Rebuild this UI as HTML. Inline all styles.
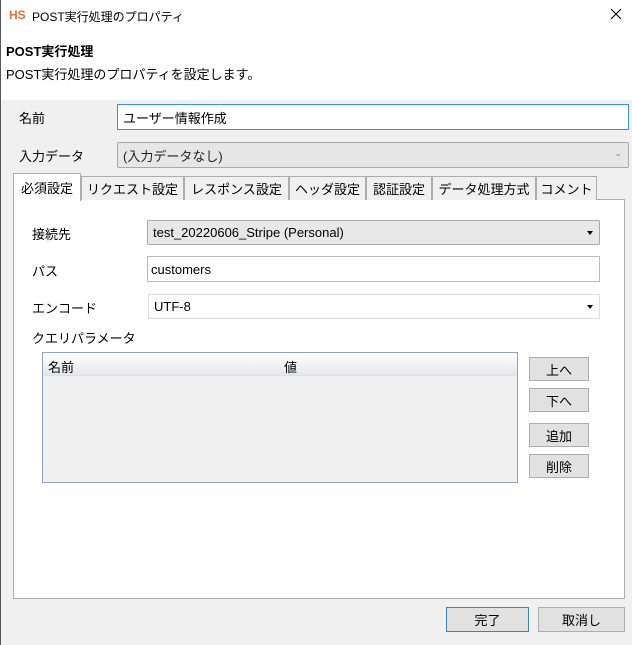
<!DOCTYPE html>
<html><head><meta charset="utf-8"><style>
*{box-sizing:border-box;margin:0;padding:0}
body{width:632px;height:645px;overflow:hidden;background:#f0f0f0;font-family:"Liberation Sans","Noto Sans CJK JP",sans-serif;font-size:13px;color:#000;position:relative}
.a{position:absolute}
.top{left:0;top:0;width:632px;height:100px;background:#fff}
.lb{left:0;top:0;width:1px;height:645px;background:#555}
.inp{background:#fff;border:1px solid #bbb;padding:0 5px;display:flex;align-items:center}
.cmb{background:#e8e8e8;border:1px solid #aaa;border-radius:2px;padding:0 5px;display:flex;align-items:center}
.arr{position:absolute;right:6px;top:50%;margin-top:-2px;border-left:3.5px solid transparent;border-right:3.5px solid transparent;border-top:4px solid #000}
.tab{top:176px;height:24px;background:#f0f0f0;border:1px solid #adadad;border-bottom:none;display:flex;align-items:center;justify-content:center;font-size:13px}
.btn{background:#e1e1e1;border:1px solid #adadad;display:flex;align-items:center;justify-content:center}
</style></head><body>
<div class="a top"></div>
<div class="a lb"></div>
<div class="a" style="left:9px;top:8px;font-weight:bold;color:#e8702a;font-size:12px">HS</div>
<div class="a" style="left:32px;top:8px;font-size:12px">POST実行処理のプロパティ</div>
<svg class="a" style="left:610px;top:8px" width="12" height="12" viewBox="0 0 12 12"><path d="M1 1L11 11M11 1L1 11" stroke="#000" stroke-width="1.1"/></svg>
<div class="a" style="left:6px;top:41px;font-weight:bold">POST実行処理</div>
<div class="a" style="left:6px;top:64px">POST実行処理のプロパティを設定します。</div>

<div class="a" style="left:19px;top:108px">名前</div>
<div class="a inp" style="left:117px;top:104px;width:512px;height:26px;border-color:#3c8fd8">ユーザー情報作成</div>
<div class="a" style="left:19px;top:146px">入力データ</div>
<div class="a cmb" style="left:117px;top:142px;width:512px;height:26px;background:#e6e6e6;color:#222">(入力データなし)<span style="position:absolute;right:6px;top:5px;font-size:9px;color:#888">⌄</span></div>

<div class="a" style="left:13px;top:199px;width:612px;height:400px;background:#fff;border:1px solid #adadad"></div>
<div class="a tab" style="left:81px;width:103px">リクエスト設定</div>
<div class="a tab" style="left:184px;width:105px">レスポンス設定</div>
<div class="a tab" style="left:289px;width:77px">ヘッダ設定</div>
<div class="a tab" style="left:366px;width:66px">認証設定</div>
<div class="a tab" style="left:432px;width:104px">データ処理方式</div>
<div class="a tab" style="left:536px;width:61px">コメント</div>
<div class="a tab" style="left:13px;top:173px;width:68px;height:28px;background:#fff;z-index:2">必須設定</div>

<div class="a" style="left:32px;top:224px">接続先</div>
<div class="a cmb" style="left:147px;top:220px;width:453px;height:25px">test_20220606_Stripe (Personal)<span class="arr"></span></div>
<div class="a" style="left:32px;top:261px">パス</div>
<div class="a inp" style="left:147px;top:256px;width:453px;height:26px;padding-left:3px">customers</div>
<div class="a" style="left:32px;top:298px">エンコード</div>
<div class="a inp" style="left:148px;top:294px;width:452px;height:25px;border-color:#ddd">UTF-8<span class="arr"></span></div>
<div class="a" style="left:32px;top:328px">クエリパラメータ</div>

<div class="a" style="left:42px;top:352px;width:476px;height:131px;background:#f0f0f0;border:1px solid #8aa6c6">
<div style="height:23px;background:linear-gradient(#fff,#e4e6ea);position:relative;border-bottom:1px solid #e0e0e0">
<span class="a" style="left:5px;top:4px">名前</span><span class="a" style="left:241px;top:4px">値</span></div></div>

<div class="a btn" style="left:529px;top:357px;width:60px;height:24px">上へ</div>
<div class="a btn" style="left:529px;top:388px;width:60px;height:24px">下へ</div>
<div class="a btn" style="left:529px;top:423px;width:60px;height:24px">追加</div>
<div class="a btn" style="left:529px;top:454px;width:60px;height:24px">削除</div>

<div class="a btn" style="left:446px;top:607px;width:83px;height:25px;border-color:#2f86d6">完了</div>
<div class="a btn" style="left:538px;top:607px;width:87px;height:25px">取消し</div>
</body></html>
